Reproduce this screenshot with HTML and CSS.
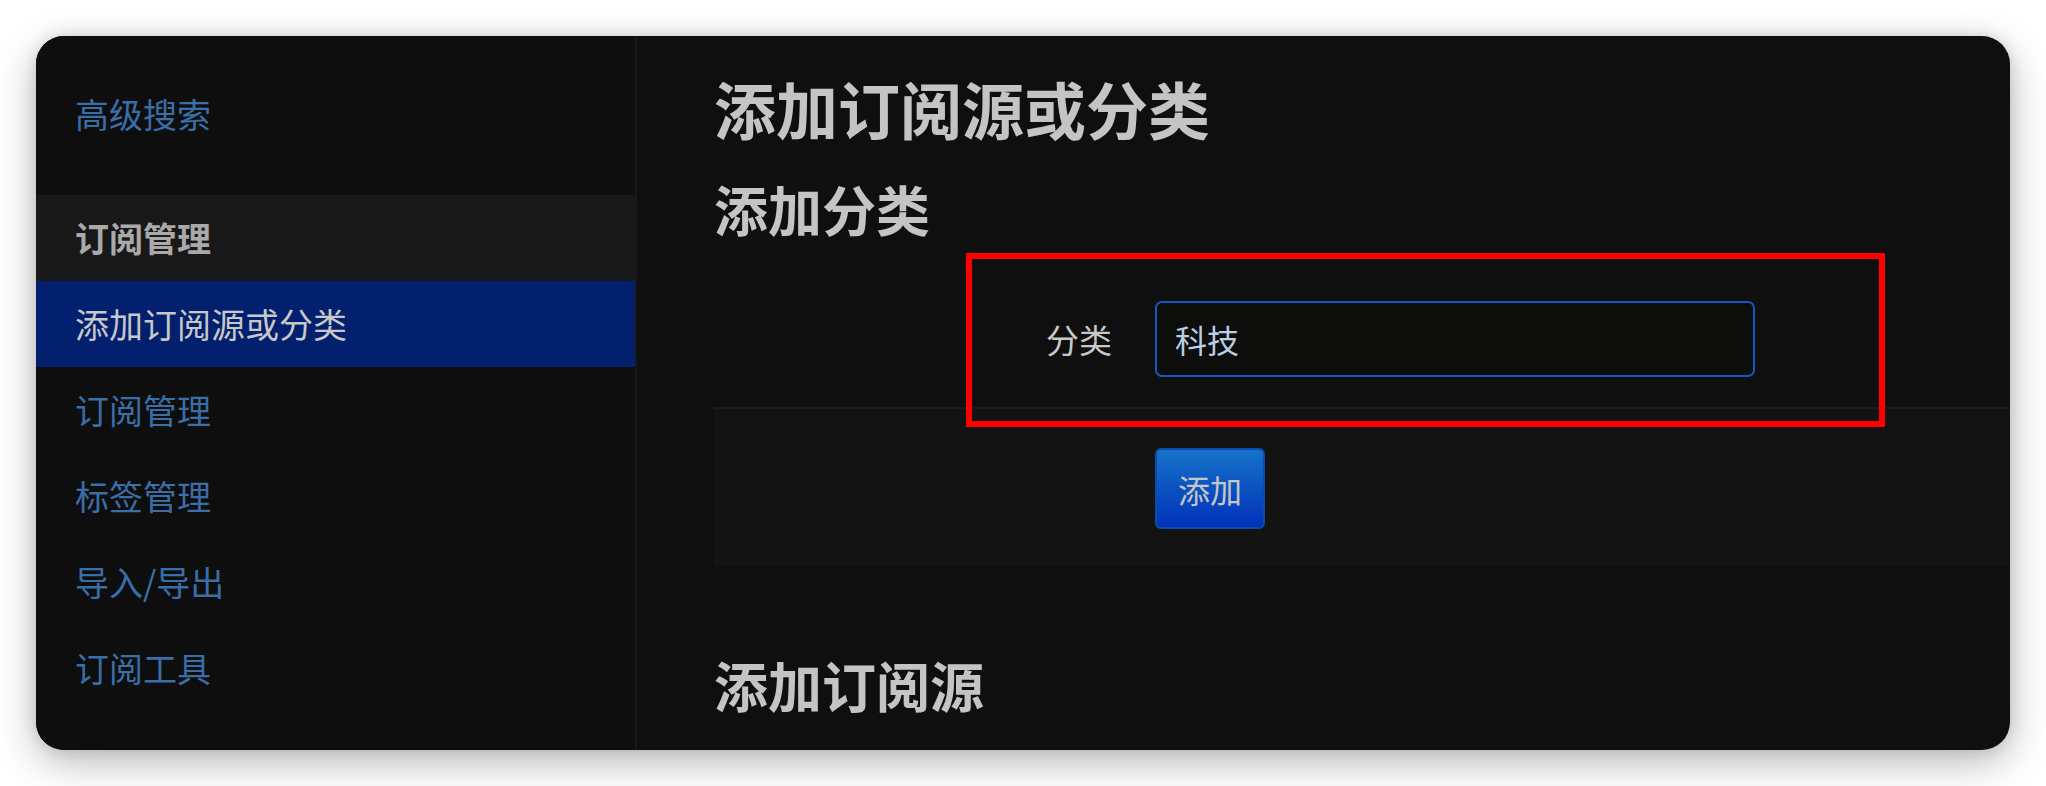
FILE: index.html
```html
<!DOCTYPE html>
<html lang="zh-CN">
<head>
  <meta charset="UTF-8" />
  <title>添加订阅源或分类</title>
  <link rel="stylesheet" href="styles.css">
</head>
<body>

  <div class="app-window">

    <nav class="sidebar">
      <ul class="nav-list nav-top">
        <li><a href="#">高级搜索</a></li>
      </ul>

      <ul class="nav-list">
        <li class="nav-header">订阅管理</li>
        <li class="active"><a href="#">添加订阅源或分类</a></li>
        <li><a href="#">订阅管理</a></li>
        <li><a href="#">标签管理</a></li>
        <li><a href="#">导入/导出</a></li>
        <li><a href="#">订阅工具</a></li>
      </ul>
    </nav>

    <main class="content">
      <h1>添加订阅源或分类</h1>

      <h2>添加分类</h2>
      <form class="category-form">
        <div class="highlight-box"></div>

        <div class="form-group">
          <label for="newCat">分类</label>
          <input type="text" id="newCat" value="科技" />
        </div>

        <div class="form-actions">
          <button type="button" class="btn-primary">添加</button>
        </div>
      </form>

      <h2 class="section-gap">添加订阅源</h2>
    </main>

  </div>

</body>
</html>
```

FILE: styles.css
```css
html, body {
  margin: 0;
  padding: 0;
  width: 100%;
  height: 100%;
  background: #fff;
  overflow: hidden;
  font-family: "Noto Sans CJK SC", "Noto Sans", sans-serif;
}

.app-window {
  display: flex;
  margin: 36px;
  height: calc(100vh - 72px);
  background: #0f0f0f;
  border-radius: 28px;
  box-shadow:
    0 12px 40px rgba(0,0,0,0.28),
    0 0 14px rgba(0,0,0,0.12);
  overflow: hidden;
}

/* sidebar */

.sidebar {
  flex: 0 0 599px;
  padding-top: 35px;
  background: #0e0e0e;
  border-right: 2px solid #181818;
}

.nav-list {
  list-style: none;
  margin: 0;
  padding: 0;
}
.nav-top {
  margin-bottom: 38px;
}

.nav-list li {
  height: 86px;
  line-height: 86px;
  font-size: 34px;
}
.nav-list a {
  display: block;
  padding-left: 39px;
  color: #3a6ea8;
  text-decoration: none;
}

.nav-header {
  padding-left: 39px;
  background: #181818;
  color: #a9a9a9;
  font-weight: bold;
}

.nav-list .active {
  background: #03206f;
}
.nav-list .active a {
  color: #c8c8c8;
}

/* content */

.content {
  flex: 1;
  padding: 35px 0 0 77px;
  color: #c4c4c4;
}

.content h1 {
  margin: 0;
  font-size: 62px;
  line-height: 74px;
  font-weight: bold;
}

.content h2 {
  margin: 32px 0 0;
  font-size: 54px;
  line-height: 64px;
  font-weight: bold;
}
.content h2.section-gap {
  margin-top: 87px;
}

.category-form {
  position: relative;
  margin-top: 60px;
}

.form-group {
  display: grid;
  grid-template-columns: 398px 600px;
  column-gap: 43px;
  align-items: center;
}
.form-group label {
  text-align: right;
  font-size: 33px;
  color: #c8c8c8;
}
.form-group input {
  box-sizing: border-box;
  height: 76px;
  padding: 0 18px;
  border: 2px solid #1457c0;
  border-radius: 7px;
  background: #0d0d0c;
  color: #b8cfe8;
  font-family: inherit;
  font-size: 32px;
  outline: none;
}

.form-actions {
  margin-top: 30px;
  padding: 39px 0 37px 441px;
  background: #131313;
  border-top: 2px solid #1c1c1c;
}

.btn-primary {
  box-sizing: border-box;
  width: 110px;
  height: 81px;
  padding: 0;
  border: 2px solid #0a4cab;
  border-radius: 6px;
  background: linear-gradient(to bottom, #1573c9, #0131ba);
  color: #c6c6c6;
  font-family: inherit;
  font-size: 32px;
  cursor: pointer;
}

.highlight-box {
  position: absolute;
  top: -48px;
  left: 252px;
  width: 919px;
  height: 174px;
  box-sizing: border-box;
  border: 6px solid #ff0000;
  z-index: 2;
  pointer-events: none;
}
```
